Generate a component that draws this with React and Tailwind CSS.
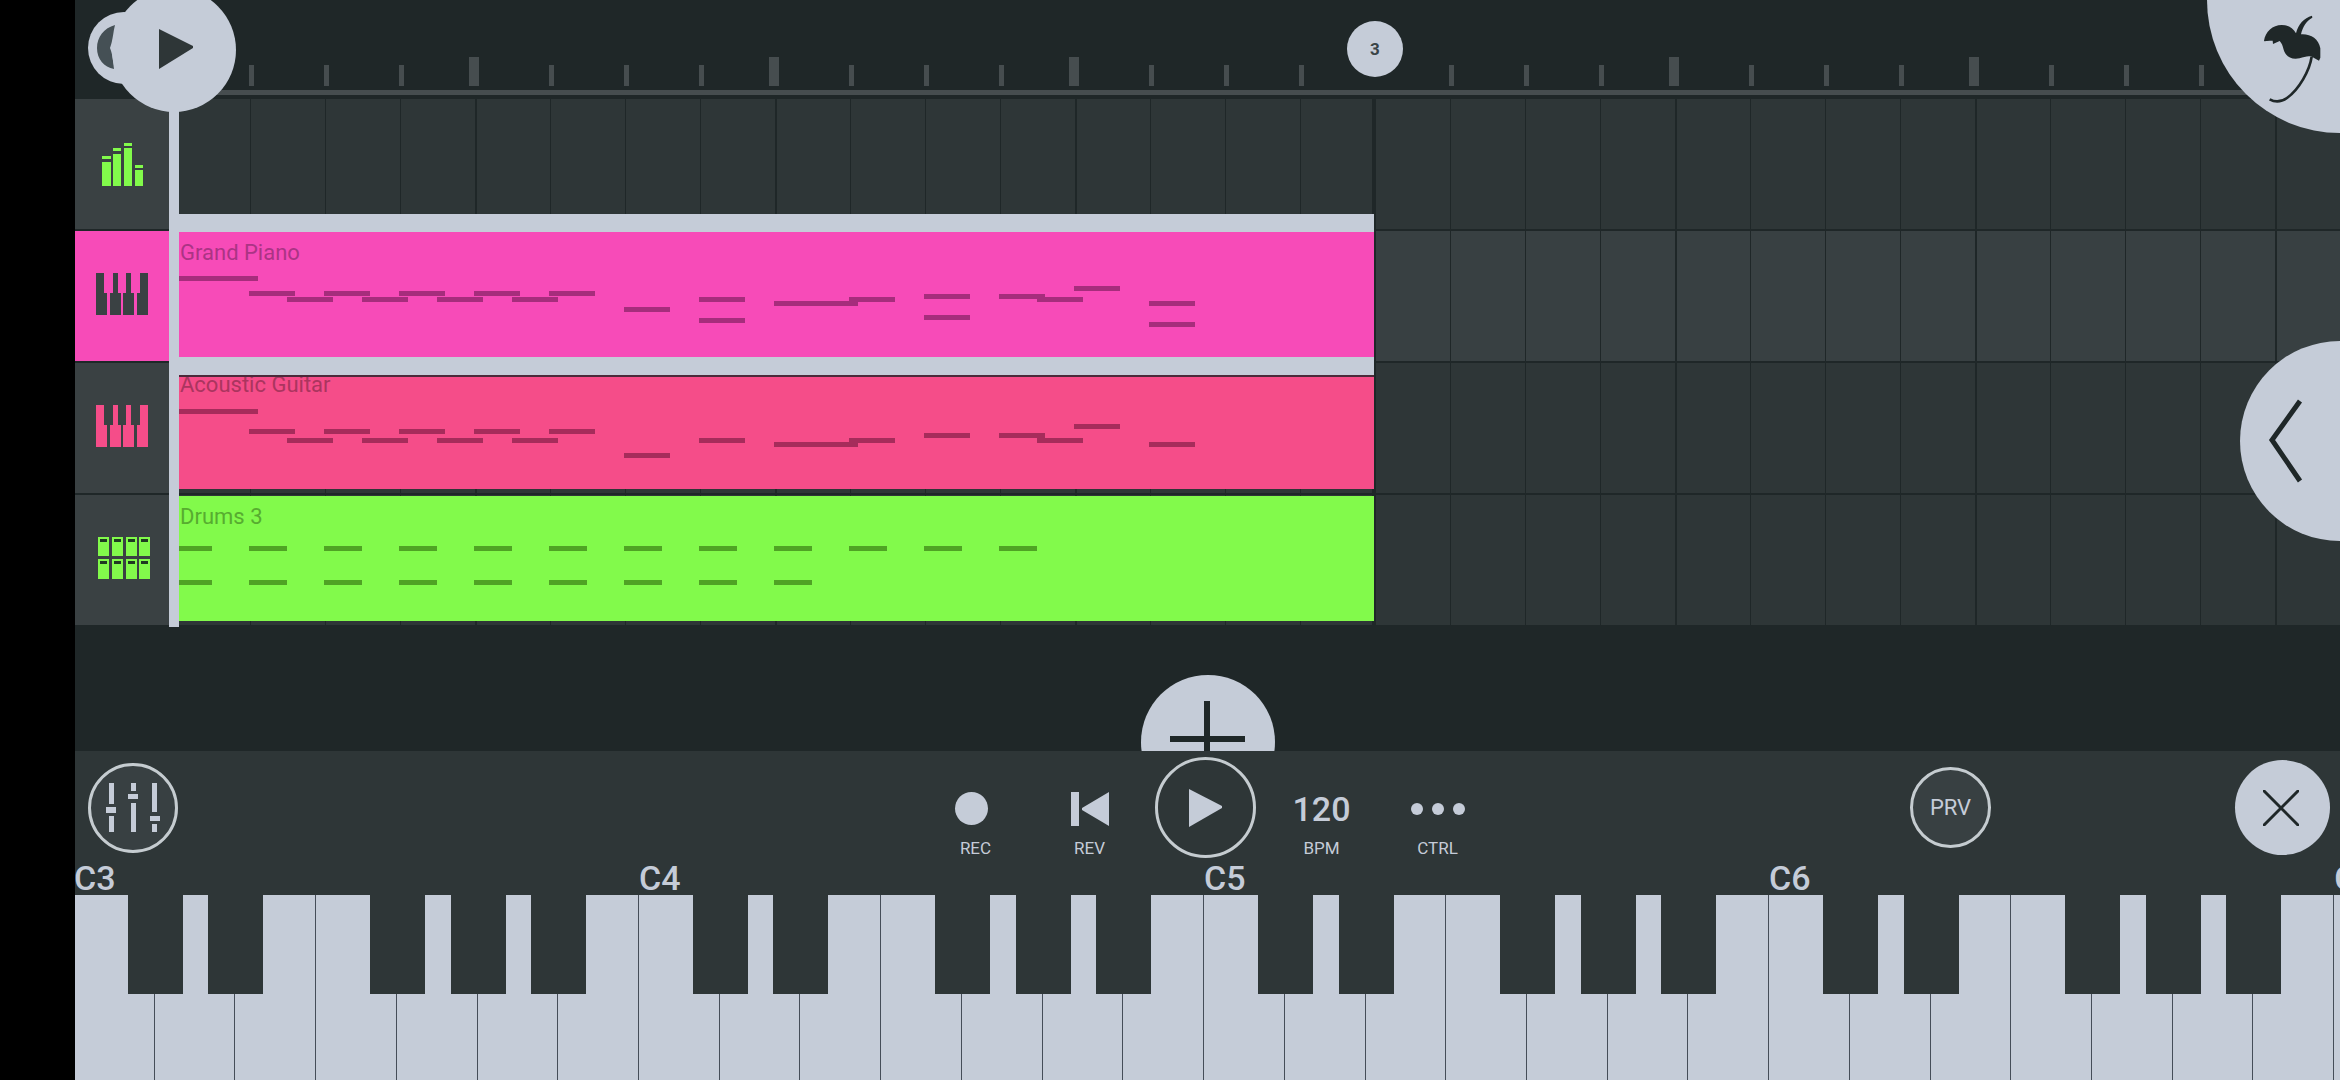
const beats = Array.from({ length: 29 }, (_, i) => i);
const LOOP_BEAT = 16;

/* Notes are [start, top, length] in pixels, measured from the clip's corner. */
const runStarts = [75, 150, 225, 300, 375];
const lowStarts = [113, 188, 263, 338];

const pianoNotes = [
  [0, 44, 84],
  ...runStarts.map((x) => [x, 59, 46]),
  ...lowStarts.map((x) => [x, 65, 46]),
  [450, 75, 46],
  [525, 65, 46],
  [525, 86, 46],
  [600, 69, 84],
  [675, 65, 46],
  [750, 62, 46],
  [750, 83, 46],
  [825, 62, 46],
  [863, 65, 46],
  [900, 54, 46],
  [975, 69, 46],
  [975, 90, 46],
];

const guitarNotes = [
  [0, 45, 84],
  ...runStarts.map((x) => [x, 65, 46]),
  ...lowStarts.map((x) => [x, 74, 46]),
  [450, 89, 46],
  [525, 74, 46],
  [600, 78, 84],
  [675, 74, 46],
  [750, 69, 46],
  [825, 69, 46],
  [863, 74, 46],
  [900, 60, 46],
  [975, 78, 46],
];

const drumNotes = [
  ...beats.slice(0, 12).map((b) => [b * 75, 50, 38]),
  ...beats.slice(0, 9).map((b) => [b * 75, 84, 38]),
];

function LevelsIcon() {
  return (
    <svg className="h-[43px] w-[41px] text-[#82fa4b]" viewBox="0 0 41 43" fill="currentColor" aria-hidden="true">
      <path d="M0 19h9v24H0zM11 11h8v32h-8zM22 5h8v38h-8zM33 27h8v16h-8z" />
      <path d="M0 13h9v3H0zM11 5h8v3h-8zM22 0h8v3h-8zM33 22h8v3h-8z" />
    </svg>
  );
}

function KeysIcon({ className }) {
  return (
    <svg className={className} viewBox="0 0 52 42" fill="currentColor" aria-hidden="true">
      <path d="M0 0h8v20h3v22H0zM17 0h5v20h3v22H14V20h3zM30 0h5v20h3v22H27V20h3zM44 0h8v42H41V20h3z" />
    </svg>
  );
}

function PadsIcon() {
  const columns = [0, 14, 28, 41];
  return (
    <svg className="h-[42px] w-[52px] text-[#82fa4b]" viewBox="0 0 52 42" fill="currentColor" aria-hidden="true">
      {columns.map((x) => (
        <g key={x}>
          <rect x={x} y="0" width="11" height="19" />
          <rect x={x} y="22" width="11" height="20" />
          <rect x={x + 2} y="2" width="7" height="3" fill="#1f3a22" />
          <rect x={x + 2} y="24" width="7" height="3" fill="#1f3a22" />
        </g>
      ))}
    </svg>
  );
}

function Clip({ clip }) {
  return (
    <div className={`relative mt-px h-[125px] w-[1200px] ${clip.surface}`}>
      <span className={`block pt-2 pl-[6px] text-[22px] leading-[26px] font-normal ${clip.text}`}>{clip.name}</span>
      {clip.notes.map(([left, top, width], i) => (
        <i key={i} className={`absolute h-[5px] ${clip.note}`} style={{ left, top, width }} />
      ))}
    </div>
  );
}

function GridLines() {
  return (
    <div className="col-start-1 row-start-1 flex min-w-0 overflow-hidden pl-[6px]">
      {beats.map((b) => (
        <div
          key={b}
          className={
            b === LOOP_BEAT
              ? "-ml-[3px] w-[78px] shrink-0 border-l-4 border-[#1f2728]"
              : b % 4 === 0
                ? "w-[75px] shrink-0 border-l-2 border-[#1f2728]"
                : "w-[75px] shrink-0 border-l border-[#1f2728]"
          }
        />
      ))}
    </div>
  );
}

const tracks = [
  { label: "Master", header: "bg-[#3a4143]", lane: "bg-[#2e3637]", icon: <LevelsIcon /> },
  {
    label: "Grand Piano",
    header: "bg-[#f74bb8]",
    lane: "bg-[#384042]",
    icon: <KeysIcon className="mb-1 h-[42px] w-[52px] text-[#3a4143]" />,
    clip: {
      name: "Grand Piano",
      surface: "z-10 bg-[#f74bb8] shadow-[0_-18px_0_#c5ccd8,0_18px_0_#c5ccd8,0_20px_0_#4b2a3a]",
      text: "text-[#ab3485]",
      note: "bg-[#a62d7c]",
      notes: pianoNotes,
    },
  },
  {
    label: "Acoustic Guitar",
    header: "bg-[#3a4143]",
    lane: "bg-[#2e3637]",
    icon: <KeysIcon className="mb-1 h-[42px] w-[52px] text-[#f54d89]" />,
    clip: {
      name: "Acoustic Guitar",
      surface: "bg-[#f54d89]",
      text: "text-[#ab355f]",
      note: "bg-[#a62c5b]",
      notes: guitarNotes,
    },
  },
  {
    label: "Drums 3",
    header: "bg-[#3a4143]",
    lane: "bg-[#2e3637]",
    icon: (
      <span className="mb-1 ml-1">
        <PadsIcon />
      </span>
    ),
    clip: {
      name: "Drums 3",
      surface: "bg-[#82fa4b]",
      text: "text-[#57ac30]",
      note: "bg-[#4fa324]",
      notes: drumNotes,
    },
  },
];

function Ruler() {
  return (
    <div className="flex h-[99px] flex-col pl-[99px] pt-[57px]">
      <div className="flex h-[29px] items-end overflow-hidden">
        {beats.map((b) => (
          <div key={b} className="w-[75px] shrink-0">
            {b % 4 !== 0 && <div className="h-[21px] w-[5px] bg-[#464d4f]" />}
            {b % 4 === 0 && b !== LOOP_BEAT && <div className="-ml-[5px] h-[29px] w-[10px] bg-[#464d4f]" />}
          </div>
        ))}
      </div>
      <div className="mt-1 h-[5px] bg-[#464d4f]" />
    </div>
  );
}

function Arrangement() {
  return (
    <section className="relative overflow-hidden bg-[#1f2728]" aria-label="Playlist">
      <Ruler />
      {tracks.map((t) => (
        <div key={t.label} className="flex h-[132px]">
          <button
            type="button"
            aria-label={t.label}
            className={`mb-[2px] flex w-[94px] shrink-0 items-center justify-center ${t.header}`}
          >
            {t.icon}
          </button>
          <div className="grid min-w-0 flex-1 grid-cols-[minmax(0,1fr)]">
            <div className={`col-start-1 row-start-1 mb-[2px] ${t.lane}`} />
            <GridLines />
            {t.clip && (
              <div className="col-start-1 row-start-1 pl-[5px]">
                <Clip clip={t.clip} />
              </div>
            )}
          </div>
        </div>
      ))}
      <div className="flex h-[124px] items-start justify-center overflow-hidden pt-12">
        <button type="button" aria-label="Add track" className="size-[134px] shrink-0 rounded-full bg-[#c5ccd8]">
          <svg className="size-[134px]" viewBox="0 0 134 134" stroke="#1f2728" strokeWidth="6" aria-hidden="true">
            <path d="M66 26v82M29 64h75" />
          </svg>
        </button>
      </div>

      <button
        type="button"
        aria-label="Loop start"
        className="absolute left-[13px] top-3 z-20 size-[72px] rounded-full bg-[#c5ccd8]"
      >
        <svg className="size-[72px]" viewBox="0 0 72 72" aria-hidden="true">
          <path d="M27 13C16 16 9 25 9 36s7 19 17 21c-1-8-1-13-4-21 3-8 3-15 5-23z" fill="#455055" />
        </svg>
      </button>
      <div className="absolute left-[94px] top-0 z-20 h-[627px] w-[10px] bg-[#c5ccd8]" />
      <button
        type="button"
        aria-label="Playhead"
        className="absolute left-[37px] -top-[12px] z-20 size-[124px] rounded-full bg-[#c5ccd8]"
      >
        <svg className="size-[124px]" viewBox="0 0 124 124" fill="#2e3637" aria-hidden="true">
          <path d="M47 41l34 17v2L47 81z" />
        </svg>
      </button>
      <button
        type="button"
        className="absolute left-[1272px] top-[21px] z-20 size-14 rounded-full bg-[#c5ccd8] text-[17px] leading-[56px] font-bold text-[#3a4447]"
      >
        3
      </button>
      <button
        type="button"
        aria-label="Main menu"
        className="absolute right-0 top-0 z-20 h-[133px] w-[133px] rounded-bl-full bg-[#c5ccd8]"
      >
        <svg className="absolute right-0 top-0 h-[110px] w-[90px]" viewBox="0 0 270 330" fill="#1f2728" aria-hidden="true">
          <path d="M42 122C46 95 68 75 95 75c20 0 34 9 43 25 6-26 24-47 48-53l1 6c-17 9-29 27-34 50 28-2 53 13 58 42v28l-4 9-16-9c-12-8-26-3-42 2-26 6-42-7-48-26-3-12-6-20-12-26l-20 9-1-10h-9l-16 2z" />
          <path d="M185 170c-6 42-38 98-74 124-20 14-38 12-52 4" fill="none" stroke="#1f2728" strokeWidth="8" />
        </svg>
      </button>
      <button
        type="button"
        aria-label="Open side panel"
        className="absolute right-0 top-[341px] z-20 h-[200px] w-[100px] rounded-l-full bg-[#c5ccd8]"
      >
        <svg className="h-[200px] w-[100px]" viewBox="0 0 100 200" fill="none" stroke="#1f2728" strokeWidth="5" aria-hidden="true">
          <path d="M60 60L32 99l28 41" />
        </svg>
      </button>
    </section>
  );
}

function TransportButton({ label, shift, children }) {
  return (
    <button type="button" className="flex w-[116px] flex-col items-center pt-[34px]">
      <span className="flex h-[34px] items-center justify-center text-[34px] leading-[34px]">{children}</span>
      <span className={`mt-3 text-[17px] leading-5 font-normal ${shift ? "pl-1" : ""}`}>{label}</span>
    </button>
  );
}

function Toolbar() {
  return (
    <div className="grid h-[108px] grid-cols-[1fr_auto_1fr] items-center pt-[5px] text-[#c5ccd8]">
      <div className="pl-[13px]">
        <button
          type="button"
          aria-label="Mixer"
          className="flex size-[90px] items-center justify-center rounded-full border-3 border-[#c5ccd0] bg-[#384042]"
        >
          <svg className="h-[49px] w-[54px]" viewBox="0 0 54 49" fill="currentColor" aria-hidden="true">
            <path d="M3 0h5v21H3zM0 24h10v6H0zM3 33h5v16H3z" />
            <path d="M25 0h5v8h-5zM22 11h10v5H22zM25 20h5v29h-5z" />
            <path d="M46 0h5v29h-5zM44 33h10v5H44zM46 41h5v8h-5z" />
          </svg>
        </button>
      </div>

      <div className="mr-1 flex items-center">
        <TransportButton label="REC" shift>
          <span className="mr-1 size-[33px] rounded-full bg-[#c5ccd8]" />
        </TransportButton>
        <TransportButton label="REV">
          <svg className="h-[34px] w-[38px]" viewBox="0 0 38 34" fill="currentColor" aria-hidden="true">
            <path d="M0 0h8v34H0zM38 0v34L11 18v-2z" />
          </svg>
        </TransportButton>
        <div className="flex w-[116px] justify-center">
          <button
            type="button"
            aria-label="Play"
            className="flex size-[101px] items-center justify-center rounded-full border-3 border-[#c5ccd0]"
          >
            <svg className="h-[38px] w-[33px]" viewBox="0 0 33 38" fill="currentColor" aria-hidden="true">
              <path d="M0 0l33 17v2L0 38z" />
            </svg>
          </button>
        </div>
        <TransportButton label="BPM">120</TransportButton>
        <TransportButton label="CTRL">
          <svg className="h-3 w-[54px]" viewBox="0 0 54 12" fill="currentColor" aria-hidden="true">
            <circle cx="6" cy="6" r="6" />
            <circle cx="27" cy="6" r="6" />
            <circle cx="48" cy="6" r="6" />
          </svg>
        </TransportButton>
      </div>

      <div className="flex items-center justify-end gap-[244px] pr-[10px]">
        <button
          type="button"
          className="size-[81px] rounded-full border-3 border-[#c5ccd0] bg-[#384042] text-[22px] leading-6 font-normal"
        >
          PRV
        </button>
        <button
          type="button"
          aria-label="Close keyboard"
          className="flex size-[95px] items-center justify-center rounded-full bg-[#c5ccd8] pr-1"
        >
          <svg className="size-9" viewBox="0 0 36 36" stroke="#1f2728" strokeWidth="3" aria-hidden="true">
            <path d="M0 0l36 36M36 0L0 36" />
          </svg>
        </button>
      </div>
    </div>
  );
}

const NOTE_NAMES = ["C", "D", "E", "F", "G", "A", "B"];
const HAS_SHARP = [true, true, false, true, true, true, false];

function PianoKey({ index }) {
  const name = NOTE_NAMES[index % 7];
  const octave = 3 + Math.floor(index / 7);
  return (
    <div className={index === 28 ? "flex w-[7px] shrink-0 flex-col" : "flex min-w-0 flex-1 flex-col"}>
      <div className="h-9 pl-px text-[34px] leading-[38px] whitespace-nowrap text-[#c5ccd8]">
        {name === "C" ? `C${octave}` : ""}
      </div>
      <div className="relative flex min-h-[185px] flex-1">
        <button
          type="button"
          aria-label={`${name}${octave}`}
          className="flex-1 border-l border-[#454d58] bg-[#c5ccd8]"
        />
        {HAS_SHARP[index % 7] && index < 28 && (
          <button
            type="button"
            aria-label={`${name}#${octave}`}
            className="absolute -right-[29px] top-0 z-10 h-[99px] w-[55px] bg-[#2e3637]"
          />
        )}
      </div>
    </div>
  );
}

function Keyboard() {
  return (
    <div className="-ml-[2px] flex flex-1">
      {Array.from({ length: 29 }, (_, i) => (
        <PianoKey key={i} index={i} />
      ))}
    </div>
  );
}

export default function App() {
  return (
    <main className="flex min-h-screen bg-black pl-[75px] font-['Roboto',sans-serif] font-medium">
      <div className="flex min-w-0 flex-1 flex-col overflow-hidden bg-[#2e3637]">
        <Arrangement />
        <Toolbar />
        <Keyboard />
      </div>
    </main>
  );
}
